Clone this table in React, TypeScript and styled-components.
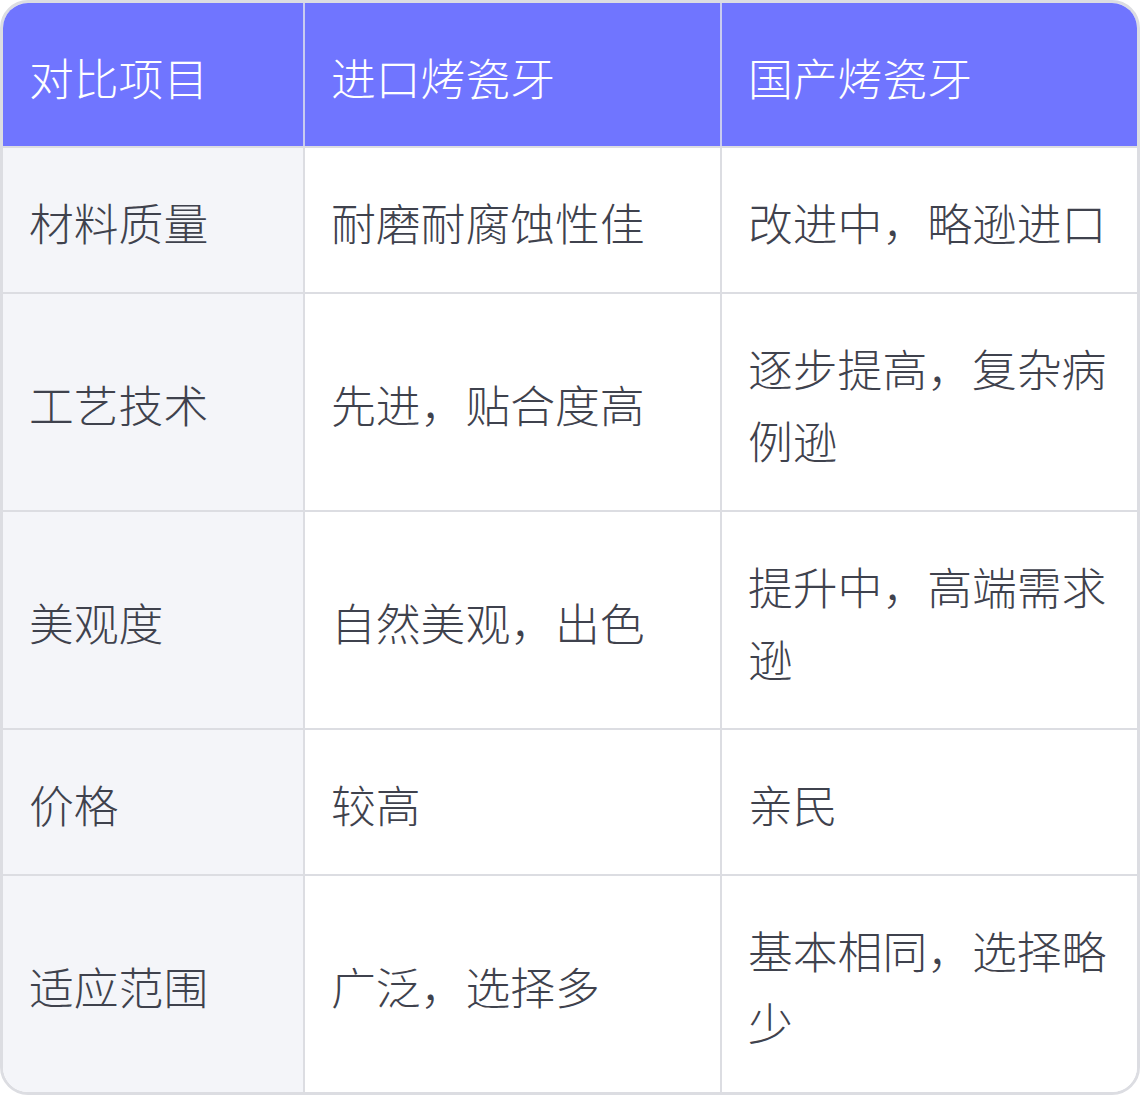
import styled, { createGlobalStyle } from 'styled-components';

const GlobalStyle = createGlobalStyle`
  html, body {
    margin: 0;
    padding: 0;
    background: #ffffff;
  }
  body {
    font-family: "Noto Sans CJK SC", "Noto Sans", sans-serif;
  }
`;

const Wrapper = styled.div`
  width: 1140px;
  box-sizing: border-box;
  border: 3px solid #dcdde2;
  border-radius: 28px;
  overflow: hidden;
  background: #ffffff;
`;

const Table = styled.table`
  width: 100%;
  border-collapse: collapse;
  table-layout: fixed;
`;

const Col = styled.col<{ width: number }>`
  width: ${props => props.width}px;
`;

const HeadCell = styled.th`
  background: #7075ff;
  color: #ffffff;
  font-weight: 300;
  font-size: 44.8px;
  line-height: 1.6;
  text-align: left;
  padding: 37.5px 26px 34px;
  border-left: 2px solid #c9cbf0;
  border-bottom: 2px solid #dcdde2;

  &:first-child {
    border-left: none;
  }
`;

const Cell = styled.td<{ label?: boolean }>`
  background: ${props => (props.label ? '#f4f5f9' : '#ffffff')};
  color: #3f424d;
  font-weight: 300;
  font-size: 44.8px;
  line-height: 1.6;
  padding: 38px 26px 34.5px;
  border-left: 2px solid #dcdde2;
  border-top: 2px solid #dcdde2;
  vertical-align: middle;

  &:first-child {
    border-left: none;
  }
`;

const rows = [
  ['材料质量', '耐磨耐腐蚀性佳', '改进中，略逊进口'],
  ['工艺技术', '先进，贴合度高', '逐步提高，复杂病例逊'],
  ['美观度', '自然美观，出色', '提升中，高端需求逊'],
  ['价格', '较高', '亲民'],
  ['适应范围', '广泛，选择多', '基本相同，选择略少'],
];

const App = () => {
  return (
    <>
      <GlobalStyle />
      <Wrapper>
        <Table>
          <colgroup>
            <Col width={301} />
            <Col width={417} />
            <Col width={416} />
          </colgroup>
          <thead>
            <tr>
              <HeadCell>对比项目</HeadCell>
              <HeadCell>进口烤瓷牙</HeadCell>
              <HeadCell>国产烤瓷牙</HeadCell>
            </tr>
          </thead>
          <tbody>
            {rows.map(row => (
              <tr key={row[0]}>
                <Cell label>{row[0]}</Cell>
                <Cell>{row[1]}</Cell>
                <Cell>{row[2]}</Cell>
              </tr>
            ))}
          </tbody>
        </Table>
      </Wrapper>
    </>
  );
};

export default App;
